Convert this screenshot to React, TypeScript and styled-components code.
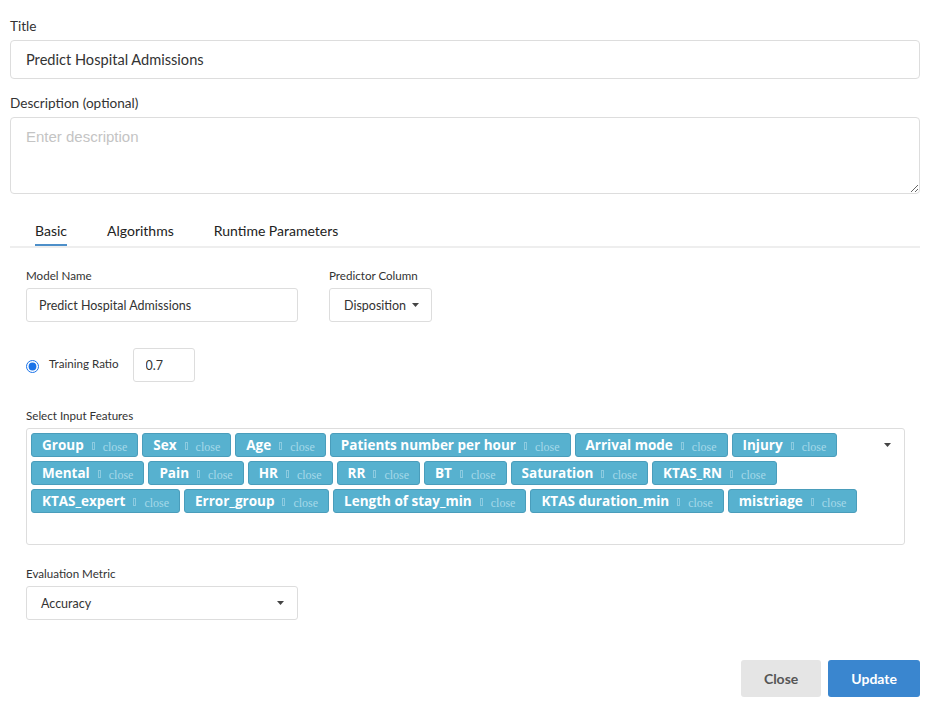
import styled, { createGlobalStyle } from "styled-components";

const GlobalStyle = createGlobalStyle`
  html, body {
    margin: 0;
    padding: 0;
    background: #ffffff;
  }
  body {
    font-family: Lato, "Open Sans", sans-serif;
    color: #333333;
  }
  * {
    box-sizing: border-box;
  }
`;

const features = [
  "Group", "Sex", "Age", "Patients number per hour", "Arrival mode", "Injury",
  "Mental", "Pain", "HR", "RR", "BT", "Saturation", "KTAS_RN",
  "KTAS_expert", "Error_group", "Length of stay_min", "KTAS duration_min", "mistriage",
];

const Caret = () => (
  <svg width="7" height="4" viewBox="0 0 7 4">
    <path d="M0 0 L7 0 L3.5 4 Z" fill="#444" />
  </svg>
);

const App = () => {
  return (
    <Page>
      <GlobalStyle />
      <Field>
        <TopLabel>Title</TopLabel>
        <TitleInput defaultValue="Predict Hospital Admissions" />
      </Field>
      <Field>
        <TopLabel>Description (optional)</TopLabel>
        <DescArea placeholder="Enter description" />
      </Field>

      <Tabs>
        <Tab $active>Basic</Tab>
        <Tab>Algorithms</Tab>
        <Tab>Runtime Parameters</Tab>
      </Tabs>

      <Body>
        <Row>
          <SmallField>
            <SmallLabel>Model Name</SmallLabel>
            <SmallInput $width={272} defaultValue="Predict Hospital Admissions" />
          </SmallField>
          <SmallField>
            <SmallLabel>Predictor Column</SmallLabel>
            <DropButton $width={103}>
              Disposition <Caret />
            </DropButton>
          </SmallField>
        </Row>

        <RatioRow>
          <Radio type="radio" defaultChecked />
          <RatioLabel>Training Ratio</RatioLabel>
          <SmallInput $width={62} defaultValue="0.7" />
        </RatioRow>

        <SmallField>
          <SmallLabel>Select Input Features</SmallLabel>
          <ChipBox>
            <ChipList>
              {features.map((f) => (
                <Chip key={f}>
                  {f}
                  <ChipClose>
                    <Tofu />
                    close
                  </ChipClose>
                </Chip>
              ))}
            </ChipList>
            <BoxCaret>
              <Caret />
            </BoxCaret>
          </ChipBox>
        </SmallField>

        <MetricField>
          <SmallLabel>Evaluation Metric</SmallLabel>
          <DropButton $width={272} $spread>
            Accuracy <Caret />
          </DropButton>
        </MetricField>
      </Body>

      <Footer>
        <Button>Close</Button>
        <Button $primary>Update</Button>
      </Footer>
    </Page>
  );
};

const Page = styled.div`
  width: 937px;
  height: 721px;
  padding: 18px 17px 0 10px;
  display: flex;
  flex-direction: column;
`;

const Field = styled.div`
  display: flex;
  flex-direction: column;
  margin-bottom: 16px;
`;

const TopLabel = styled.label`
  font-size: 13.6px;
  line-height: 16px;
  color: #333;
  margin-bottom: 6px;
`;

const TitleInput = styled.input`
  height: 39px;
  border: 1px solid #dddddd;
  border-radius: 4px;
  padding: 0 15px;
  font-family: Lato, sans-serif;
  font-size: 14.6px;
  color: #333;
  outline: none;
`;

const DescArea = styled.textarea`
  height: 77px;
  border: 1px solid #dddddd;
  border-radius: 4px;
  padding: 10px 15px;
  font-family: Lato, sans-serif;
  font-size: 15px;
  color: #333;
  outline: none;
  resize: vertical;

  &::placeholder {
    font-family: "Liberation Sans", Arial, sans-serif;
    color: #c4c4c4;
  }
`;

const Tabs = styled.div`
  display: flex;
  gap: 40px;
  margin-top: 6px;
  padding-left: 25px;
  border-bottom: 2px solid #eeeeee;
`;

const Tab = styled.div<{ $active?: boolean }>`
  font-size: 14px;
  line-height: 17px;
  color: #222;
  padding: 6px 0 5px;
  border-bottom: 2px solid ${(p) => (p.$active ? "#4d8fc9" : "transparent")};
`;

const Body = styled.div`
  padding: 21px 16px 0 16px;
  display: flex;
  flex-direction: column;
`;

const Row = styled.div`
  display: flex;
  gap: 31px;
`;

const SmallField = styled.div`
  display: flex;
  flex-direction: column;
`;

const SmallLabel = styled.label`
  font-size: 11.6px;
  line-height: 14px;
  color: #333;
  margin-bottom: 5px;
`;

const SmallInput = styled.input<{ $width: number }>`
  width: ${(p) => p.$width}px;
  height: 34px;
  border: 1px solid #dddddd;
  border-radius: 3px;
  padding: 0 12px;
  font-family: Lato, sans-serif;
  font-size: 12.5px;
  color: #333;
  outline: none;
`;

const DropButton = styled.div<{ $width: number; $spread?: boolean }>`
  width: ${(p) => p.$width}px;
  height: 34px;
  border: 1px solid #dddddd;
  border-radius: 3px;
  padding: 0 ${(p) => (p.$spread ? "13px" : "10px")} 0 14px;
  display: flex;
  align-items: center;
  justify-content: ${(p) => (p.$spread ? "space-between" : "flex-start")};
  gap: 6px;
  font-size: 12.5px;
  color: #333;
  white-space: nowrap;

  svg {
    flex-shrink: 0;
  }
`;

const RatioRow = styled.div`
  display: flex;
  align-items: center;
  margin: 26px 0 27px;
`;

const Radio = styled.input`
  margin: 2px 10px 0 0;
  width: 13px;
  height: 13px;
  accent-color: #1a73e8;
`;

const RatioLabel = styled.span`
  font-size: 11.6px;
  color: #333;
  margin: 0 14px 3px 0;
`;

const ChipBox = styled.div`
  width: 879px;
  height: 117px;
  border: 1px solid #dddddd;
  border-radius: 3px;
  padding: 4px 13px 0 4px;
  display: flex;
  justify-content: space-between;
`;

const ChipList = styled.div`
  display: flex;
  flex-wrap: wrap;
  align-content: flex-start;
  gap: 4px 4px;
  width: 845px;
`;

const Chip = styled.span`
  display: inline-flex;
  align-items: center;
  height: 24px;
  padding: 0 10px;
  background: #57b1cf;
  border: 1px solid #4a9dbb;
  border-radius: 3px;
  font-family: "Open Sans", sans-serif;
  font-weight: 700;
  font-size: 13.5px;
  color: #ffffff;
`;

const ChipClose = styled.span`
  display: inline-flex;
  align-items: center;
  font-family: "Liberation Serif", serif;
  font-weight: 400;
  font-size: 12px;
  color: #a6d9e9;
  margin-left: 8px;
  padding-top: 4px;
`;

const Tofu = styled.span`
  display: inline-block;
  width: 3px;
  height: 8px;
  border: 1px solid #8ccbe0;
  margin-right: 8px;
  margin-top: -2px;
`;

const BoxCaret = styled.div`
  display: flex;
  padding-top: 10px;
`;

const MetricField = styled(SmallField)`
  margin-top: 22px;
`;

const Footer = styled.div`
  margin-top: auto;
  margin-bottom: 24px;
  display: flex;
  justify-content: flex-end;
  gap: 7px;
`;

const Button = styled.button<{ $primary?: boolean }>`
  height: 37px;
  padding: 0 23px;
  border: none;
  border-radius: 3px;
  font-family: Lato, sans-serif;
  font-weight: 700;
  font-size: 14px;
  background: ${(p) => (p.$primary ? "#3a86cf" : "#e5e5e5")};
  color: ${(p) => (p.$primary ? "#ffffff" : "#555555")};
`;

export default App;
